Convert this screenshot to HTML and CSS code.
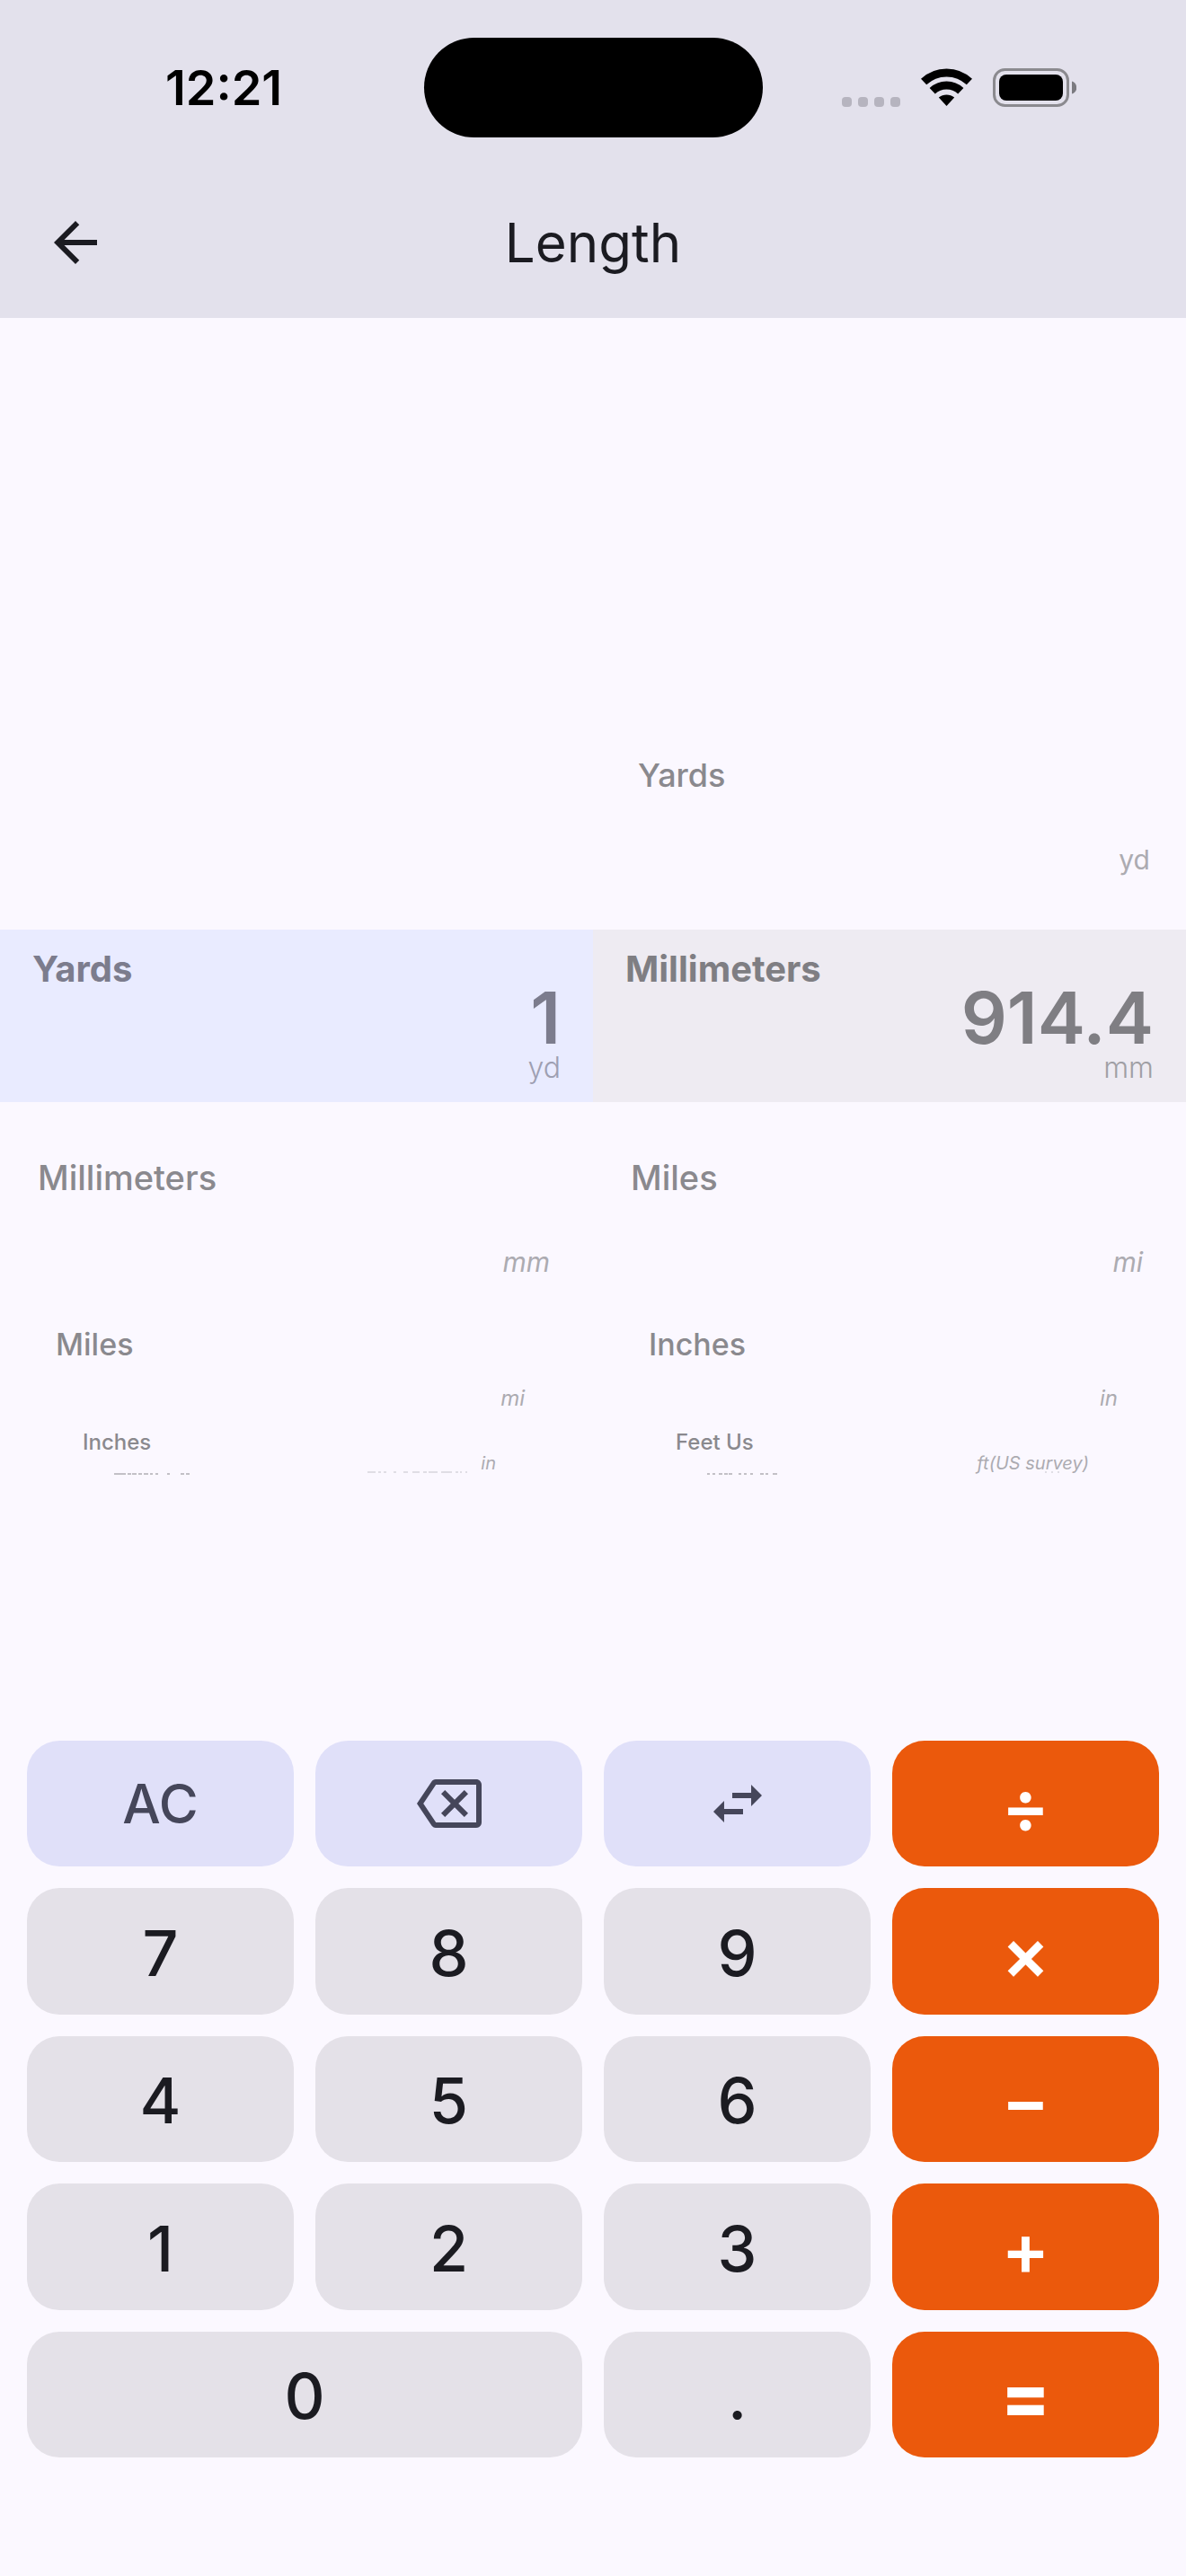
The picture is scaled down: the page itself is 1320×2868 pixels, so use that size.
FILE: index.html
```html
<!DOCTYPE html>
<html lang="en">
  <head>
    <meta charset="UTF-8" />
    <meta name="viewport" content="width=device-width, initial-scale=1.0" />
    <title>Length</title>
    <link rel="stylesheet" href="styles.css">
  </head>
  <body>
    <header>
      <div class="status">
        <span class="time">12:21</span>
        <div class="island"></div>
        <div class="indicators">
          <svg class="signal" width="65" height="11" viewBox="0 0 65 11" aria-hidden="true">
            <rect x="0" width="11" height="11" rx="4" />
            <rect x="18" width="11" height="11" rx="4" />
            <rect x="36" width="11" height="11" rx="4" />
            <rect x="54" width="11" height="11" rx="4" />
          </svg>
          <svg width="57" height="42" viewBox="0 0 57 42" aria-hidden="true">
            <path d="M3.1 15.1a37 37 0 0 1 50.8 0M12.7 25.3a23 23 0 0 1 31.6 0" fill="none" stroke="#000" stroke-width="9" />
            <path d="M28.5 42l-8.7-9.4a13.5 13.5 0 0 1 17.4 0z" />
          </svg>
          <svg width="93" height="43" viewBox="0 0 93 43" aria-hidden="true">
            <rect x="1.5" y="1.5" width="82" height="40" rx="12" fill="none" stroke="#8b8a8f" stroke-width="3" />
            <rect x="7" y="7" width="71" height="29" rx="8" />
            <path d="M88 14.5c7 2 7 12 0 14z" fill="#7b7a80" />
          </svg>
        </div>
      </div>
      <div class="toolbar">
        <button class="back" aria-label="Back">
          <svg width="72" height="72" viewBox="0 0 24 24" aria-hidden="true">
            <path d="M20 11H7.83l5.59-5.59L12 4l-8 8 8 8 1.41-1.41L7.83 13H20v-2z" />
          </svg>
        </button>
        <h1>Length</h1>
      </div>
    </header>
    <main>
      <section class="wheel from" aria-label="From unit">
        <ul class="above"></ul>
        <div class="selected">
          <span class="name">Yards</span>
          <div class="reading">
            <output>1</output>
            <span class="unit">yd</span>
          </div>
        </div>
        <ul class="below">
          <li class="near"><span class="name">Millimeters</span><span class="unit">mm</span></li>
          <li class="mid"><span class="name">Miles</span><span class="unit">mi</span></li>
          <li class="far"><span class="name">Inches</span><span class="unit">in</span></li>
          <!-- next row is seen edge-on -->
          <li class="edge" aria-hidden="true">
            <svg width="84" height="4" viewBox="0 0 84 4"><path d="M0 3h13M15 3h4M20 3h5M27 3h4M33 3h5M40 3h3M46 3h3M59 3h3M74 3h4M80 3h4" stroke="#8a898e" /></svg>
            <svg width="111" height="4" viewBox="0 0 111 4"><path d="M0 1h9M12 1h3M18 1h3M29 1h3M40 1h5M50 1h8M62 1h4M68 1h10M82 1h12M98 1h3M103 1h2M109 1h2" stroke="#c5c4ca" /></svg>
          </li>
        </ul>
      </section>
      <section class="wheel to" aria-label="To unit">
        <ul class="above">
          <li class="near"><span class="name">Yards</span><span class="unit">yd</span></li>
        </ul>
        <div class="selected">
          <span class="name">Millimeters</span>
          <div class="reading">
            <output>914.4</output>
            <span class="unit">mm</span>
          </div>
        </div>
        <ul class="below">
          <li class="near"><span class="name">Miles</span><span class="unit">mi</span></li>
          <li class="mid"><span class="name">Inches</span><span class="unit">in</span></li>
          <li class="far"><span class="name">Feet Us</span><span class="unit">ft(US survey)</span></li>
          <li class="edge" aria-hidden="true">
            <svg width="84" height="4" viewBox="0 0 84 4"><path d="M0 3h3M6 3h3M13 3h4M19 3h4M24 3h4M35 3h3M41 3h3M48 3h3M59 3h4M65 3h3M73 3h5" stroke="#8a898e" /></svg>
            <svg width="17" height="4" viewBox="0 0 17 4"><path d="M0 1h2M7 1h2M14 1h2" stroke="#c5c4ca" /></svg>
          </li>
        </ul>
      </section>
    </main>
    <div class="keypad">
      <button class="action">AC</button>
      <button class="action" aria-label="Backspace">
        <svg width="72" height="72" viewBox="0 0 24 24" aria-hidden="true">
          <path d="M22 3H7c-.69 0-1.23.35-1.59.88L0 12l5.41 8.11c.36.53.9.89 1.59.89h15c1.1 0 2-.9 2-2V5c0-1.1-.9-2-2-2zm0 16H7.07L2.4 12l4.66-7H22v14zm-11.59-2L14 13.41 17.59 17 19 15.59 15.41 12 19 8.41 17.59 7 14 10.59 10.41 7 9 8.41 12.59 12 9 15.59z" />
        </svg>
      </button>
      <button class="action" aria-label="Swap units">
        <svg width="72" height="72" viewBox="0 0 24 24" aria-hidden="true">
          <path d="M6.99 11L3 15l3.99 4v-3H14v-2H6.99v-3zM21 9l-3.99-4v3H10v2h7.01v3L21 9z" />
        </svg>
      </button>
      <button class="operator">÷</button>
      <button>7</button>
      <button>8</button>
      <button>9</button>
      <button class="operator">×</button>
      <button>4</button>
      <button>5</button>
      <button>6</button>
      <button class="operator">−</button>
      <button>1</button>
      <button>2</button>
      <button>3</button>
      <button class="operator">+</button>
      <button class="wide">0</button>
      <button>.</button>
      <button class="operator equals">=</button>
    </div>
  </body>
</html>
```
FILE: styles.css
```css
* {
  box-sizing: border-box;
}
body {
  margin: 0;
  min-height: 100vh;
  display: flex;
  flex-direction: column;
  font-family: Inter, "Liberation Sans", sans-serif;
  color: #1b1b21;
  background: #fbf8ff;
}
button {
  border: 0;
  padding: 0;
  font-family: inherit;
  color: inherit;
  cursor: pointer;
}
svg {
  display: block;
  fill: currentColor;
}
ul {
  list-style: none;
  margin: 0;
  padding: 0;
}

header {
  background: #e3e1ec;
}
.status {
  display: grid;
  grid-template-columns: 1fr 377px 1fr;
  align-items: center;
  height: 186px;
  padding-top: 8px;
  color: #000;
}
.time {
  padding-left: 184px;
  font-size: 54px;
  font-weight: 600;
}
.island {
  height: 111px;
  border-radius: 56px;
  background: #000;
}
.indicators {
  display: flex;
  justify-content: flex-end;
  align-items: center;
  gap: 23px;
  padding-right: 122px;
}
.signal {
  align-self: flex-end;
  color: #b6b4bf;
}
.toolbar {
  display: grid;
  grid-template-columns: 1fr auto 1fr;
  align-items: center;
  height: 168px;
  padding: 0 48px;
}
.back {
  justify-self: start;
  background: transparent;
}
h1 {
  margin: 0;
  font-size: 60px;
  font-weight: 400;
}

main {
  flex: 1;
  display: grid;
  grid-template-columns: 1fr 1fr;
}
.wheel {
  display: grid;
  grid-template-rows: 1fr 192px 1fr;
  color: #8a898e;
}
.above {
  display: flex;
  flex-direction: column;
  justify-content: flex-end;
  padding-bottom: 58px;
}
.below {
  padding-top: 60px;
}
.name {
  font-weight: 500;
}
.unit {
  color: #acabb1;
}
.selected {
  display: flex;
  justify-content: space-between;
  padding: 20px 36px;
}
.selected .name {
  font-size: 40px;
  line-height: 48px;
  font-weight: 700;
}
.from .selected {
  background: #e9ebff;
  color: #7c7c8d;
}
.to .selected {
  background: #eeebf2;
  color: #7f7e83;
}
.reading {
  display: flex;
  flex-direction: column;
  justify-content: flex-end;
  align-items: flex-end;
}
.reading output {
  font-size: 80px;
  line-height: 76px;
  font-weight: 600;
}
.reading .unit {
  font-size: 32px;
  line-height: 36px;
  font-weight: 300;
}
.from .reading .unit {
  color: #9e9fb2;
}
.to .reading .unit {
  color: #a09fa5;
}

/* rows get shorter as the wheel turns away */
.near,
.mid,
.far {
  display: flex;
  flex-direction: column;
  justify-content: space-between;
}
.near .unit,
.mid .unit,
.far .unit {
  align-self: flex-end;
}
.near {
  height: 138px;
  padding: 0 48px 0 42px;
  font-size: 38px;
  line-height: 48px;
}
.near .unit {
  font-size: 30px;
  line-height: 40px;
}
.above .near {
  padding: 0 40px 0 50px;
  font-size: 36px;
}
.mid {
  height: 96px;
  margin-top: 52px;
  padding: 0 76px 0 62px;
  font-size: 34px;
  line-height: 40px;
}
.mid .unit {
  font-size: 24px;
  line-height: 32px;
}
.far {
  height: 43px;
  margin-top: 21px;
  padding: 0 108px 0 92px;
  font-size: 24px;
  line-height: 24px;
}
.far .unit {
  font-size: 20px;
  line-height: 16px;
}
.below .unit {
  font-style: italic;
}
.edge {
  display: flex;
  justify-content: space-between;
  padding: 1px 140px 0 127px;
}

.keypad {
  display: grid;
  grid-template-columns: repeat(4, 1fr);
  grid-template-rows: repeat(5, 1fr);
  gap: 24px;
  height: 798px;
  margin: 30px 30px 132px;
}
.keypad button {
  display: flex;
  justify-content: center;
  align-items: center;
  padding-top: 4px;
  border-radius: 36px;
  background: #e4e1e8;
  font-size: 70px;
  font-weight: 500;
}
.keypad .action {
  padding-top: 0;
  background: #e0e0f9;
  color: #45465a;
  font-size: 60px;
}
.keypad .operator {
  background: #eb590c;
  color: #fff;
  font-size: 80px;
  font-weight: 600;
}
.keypad .equals {
  font-weight: 800;
}
.keypad .wide {
  grid-column: span 2;
}
```
